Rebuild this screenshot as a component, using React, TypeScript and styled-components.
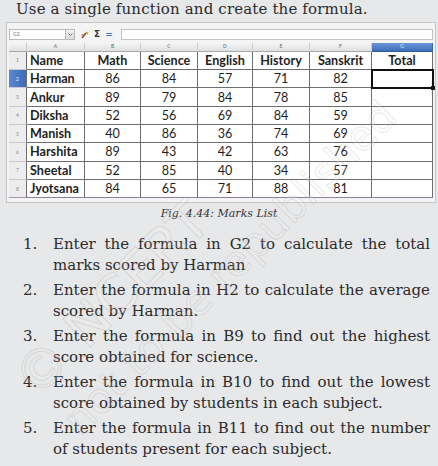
import React from "react";
import styled, { createGlobalStyle } from "styled-components";

const GlobalStyle = createGlobalStyle`
  html, body { margin: 0; padding: 0; background: #e7e8e9; }
  body { width: 438px; height: 466px; overflow: hidden; }
`;

const Page = styled.div`
  position: relative;
  width: 438px;
  height: 466px;
  overflow: hidden;
  font-family: "DejaVu Serif", serif;
  color: #2b2b2b;
`;

const Intro = styled.p`
  margin: 0;
  padding-left: 16px;
  font-size: 15px;
  line-height: 19px;
  letter-spacing: 0.15px;
  height: 22px;
`;

const SheetFrame = styled.div`
  margin-left: 6px;
  width: 430px;
  height: 181px;
  box-sizing: border-box;
  border: 1px solid #c6c6c6;
  background: #f4f4f4;
  padding: 6px 2px 0 2px;
  font-family: Lato, "Open Sans", sans-serif;
`;

const FormulaBar = styled.div`
  display: flex;
  align-items: center;
  height: 11px;
  margin-bottom: 3px;
`;

const NameBox = styled.div`
  width: 57px;
  height: 11px;
  box-sizing: border-box;
  border: 1px solid #b9b9b9;
  background: #fff;
  font-size: 5px;
  line-height: 9px;
  padding-left: 3px;
  color: #777;
`;

const DropButton = styled.div`
  width: 9px;
  height: 11px;
  box-sizing: border-box;
  border: 1px solid #b9b9b9;
  border-left: none;
  background: linear-gradient(#f2f2f2, #dcdcdc);
  display: flex;
  align-items: center;
  justify-content: center;
`;

const IconGroup = styled.div`
  display: flex;
  align-items: center;
  gap: 5px;
  margin-left: 6px;
  height: 11px;
`;

const Glyph = styled.span<{ $color: string }>`
  font-family: "DejaVu Sans", sans-serif;
  font-size: 9px;
  line-height: 11px;
  color: ${(p) => p.$color};
  font-weight: bold;
`;

const InputBox = styled.div`
  flex: 1;
  margin-left: 8px;
  height: 11px;
  box-sizing: border-box;
  border: 1px solid #c4c4c4;
  background: #fff;
`;

const Grid = styled.div`
  display: grid;
  grid-template-columns: 18px 58px 56px 57px 55px 57px 62px 61px;
  grid-template-rows: 8.7px repeat(8, 18.33px);
  background: #fff;
`;

const Corner = styled.div`
  box-sizing: border-box;
  background: linear-gradient(#f3f3f3, #e2e2e2);
  border-right: 1px solid #c9c9c9;
  border-bottom: 1px solid #a8a8a8;
`;

const ColHead = styled.div<{ $active?: boolean }>`
  box-sizing: border-box;
  background: ${(p) =>
    p.$active ? "linear-gradient(#6b97d8, #3f6fba)" : "linear-gradient(#f5f5f5, #e0e0e0)"};
  border-right: 1px solid ${(p) => (p.$active ? "#3a66ad" : "#cfcfcf")};
  border-bottom: 1px solid ${(p) => (p.$active ? "#2f5a9e" : "#a8a8a8")};
  font-size: 5px;
  line-height: 7.7px;
  text-align: center;
  color: ${(p) => (p.$active ? "#dfe9f8" : "#666")};
`;

const RowHead = styled.div<{ $active?: boolean; $last?: boolean }>`
  box-sizing: border-box;
  background: ${(p) => (p.$active ? "linear-gradient(90deg, #5a88d0, #3d6db9)" : "#ededed")};
  border-right: 1px solid #6e6e6e;
  border-bottom: 1px solid ${(p) => (p.$last ? "#a595b0" : "#cbc4d2")};
  font-size: 5px;
  display: flex;
  align-items: center;
  justify-content: center;
  color: ${(p) => (p.$active ? "#eef3fb" : "#8a8a8a")};
`;

const Cell = styled.div<{ $bold?: boolean; $left?: boolean; $last?: boolean; $selected?: boolean }>`
  position: relative;
  box-sizing: border-box;
  border-right: 1px solid #6e6e6e;
  border-bottom: 1px solid ${(p) => (p.$last ? "#8f7f9c" : "#6e6e6e")};
  font-size: 12.6px;
  font-weight: ${(p) => (p.$bold ? 700 : 400)};
  color: #1e1e1e;
  display: flex;
  align-items: center;
  justify-content: ${(p) => (p.$left ? "flex-start" : "center")};
  padding-left: ${(p) => (p.$left ? "3px" : "0")};
  ${(p) =>
    p.$selected &&
    `
    outline: 2px solid #111;
    outline-offset: -1px;
    z-index: 1;
    &::after {
      content: "";
      position: absolute;
      right: -3px;
      bottom: -3px;
      width: 4px;
      height: 4px;
      background: #111;
    }
  `}
`;

const Caption = styled.div`
  margin-top: 4px;
  height: 14px;
  font-size: 11px;
  line-height: 14px;
  font-style: italic;
  text-align: center;
  color: #333;
`;

const List = styled.ol`
  list-style: none;
  margin: 13px 0 0 0;
  padding: 0 8px 0 23px;
`;

const Item = styled.li`
  display: flex;
  font-size: 15px;
  line-height: 21px;
  & + & {
    margin-top: 4px;
  }
`;

const Num = styled.span`
  width: 30px;
  flex: none;
`;

const Body = styled.span`
  flex: 1;
  text-align: justify;
`;

const Watermark = styled.div<{ $x: number; $y: number; $size: number }>`
  position: absolute;
  left: ${(p) => p.$x}px;
  top: ${(p) => p.$y}px;
  transform: translate(-50%, -50%) rotate(-45deg);
  white-space: nowrap;
  font-family: "DejaVu Sans", sans-serif;
  font-size: ${(p) => p.$size}px;
  line-height: 1;
  color: rgba(255, 255, 255, 0.12);
  -webkit-text-stroke: 1px rgba(140, 140, 140, 0.2);
  pointer-events: none;
  z-index: 5;
`;

const cols = ["A", "B", "C", "D", "E", "F", "G"];
const header = ["Name", "Math", "Science", "English", "History", "Sanskrit", "Total"];
const rows: [string, number, number, number, number, number][] = [
  ["Harman", 86, 84, 57, 71, 82],
  ["Ankur", 89, 79, 84, 78, 85],
  ["Diksha", 52, 56, 69, 84, 59],
  ["Manish", 40, 86, 36, 74, 69],
  ["Harshita", 89, 43, 42, 63, 76],
  ["Sheetal", 52, 85, 40, 34, 57],
  ["Jyotsana", 84, 65, 71, 88, 81],
];

const items = [
  "Enter the formula in G2 to calculate the total marks scored by Harman",
  "Enter the formula in H2 to calculate the average scored by Harman.",
  "Enter the formula in B9 to find out the highest score obtained for science.",
  "Enter the formula in B10 to find out the lowest score obtained by students in each subject.",
  "Enter the formula in B11 to find out the number of students present for each subject.",
];

function WizardIcon() {
  return (
    <svg width="8" height="8" viewBox="0 0 8 8">
      <path d="M1 7 L5 2" stroke="#8a4a2a" strokeWidth="1.4" />
      <path d="M4.5 0.5 L7.5 1.5 L6 4 Z" fill="#d8a030" />
      <path d="M0.5 4 h3" stroke="#c04040" strokeWidth="1" />
    </svg>
  );
}

export default function App() {
  return (
    <Page>
      <GlobalStyle />
      <Intro>Use a single function and create the formula.</Intro>
      <SheetFrame>
        <FormulaBar>
          <NameBox>G2</NameBox>
          <DropButton>
            <svg width="5" height="3" viewBox="0 0 5 3">
              <path d="M0.5 0.5 L2.5 2.5 L4.5 0.5" stroke="#666" strokeWidth="0.8" fill="none" />
            </svg>
          </DropButton>
          <IconGroup>
            <WizardIcon />
            <Glyph $color="#333">Σ</Glyph>
            <Glyph $color="#3a78c8">=</Glyph>
          </IconGroup>
          <InputBox />
        </FormulaBar>
        <Grid>
          <Corner />
          {cols.map((c) => (
            <ColHead key={c} $active={c === "G"}>
              {c}
            </ColHead>
          ))}
          <RowHead>1</RowHead>
          {header.map((h, i) => (
            <Cell key={h} $bold $left={i === 0}>
              {h}
            </Cell>
          ))}
          {rows.map((r, ri) => {
            const last = ri === rows.length - 1;
            return (
              <React.Fragment key={r[0]}>
                <RowHead $active={ri === 0} $last={last}>
                  {ri + 2}
                </RowHead>
                <Cell $bold $left $last={last}>
                  {r[0]}
                </Cell>
                {r.slice(1).map((v, vi) => (
                  <Cell key={vi} $last={last}>
                    {v}
                  </Cell>
                ))}
                <Cell $last={last} $selected={ri === 0} />
              </React.Fragment>
            );
          })}
        </Grid>
      </SheetFrame>
      <Caption>Fig. 4.44: Marks List</Caption>
      <List>
        {items.map((t, i) => (
          <Item key={i}>
            <Num>{i + 1}.</Num>
            <Body>{t}</Body>
          </Item>
        ))}
      </List>
      <Watermark $x={112} $y={300} $size={54}>
        © NCERT
      </Watermark>
      <Watermark $x={230} $y={268} $size={42}>
        not to be republished
      </Watermark>
    </Page>
  );
}
